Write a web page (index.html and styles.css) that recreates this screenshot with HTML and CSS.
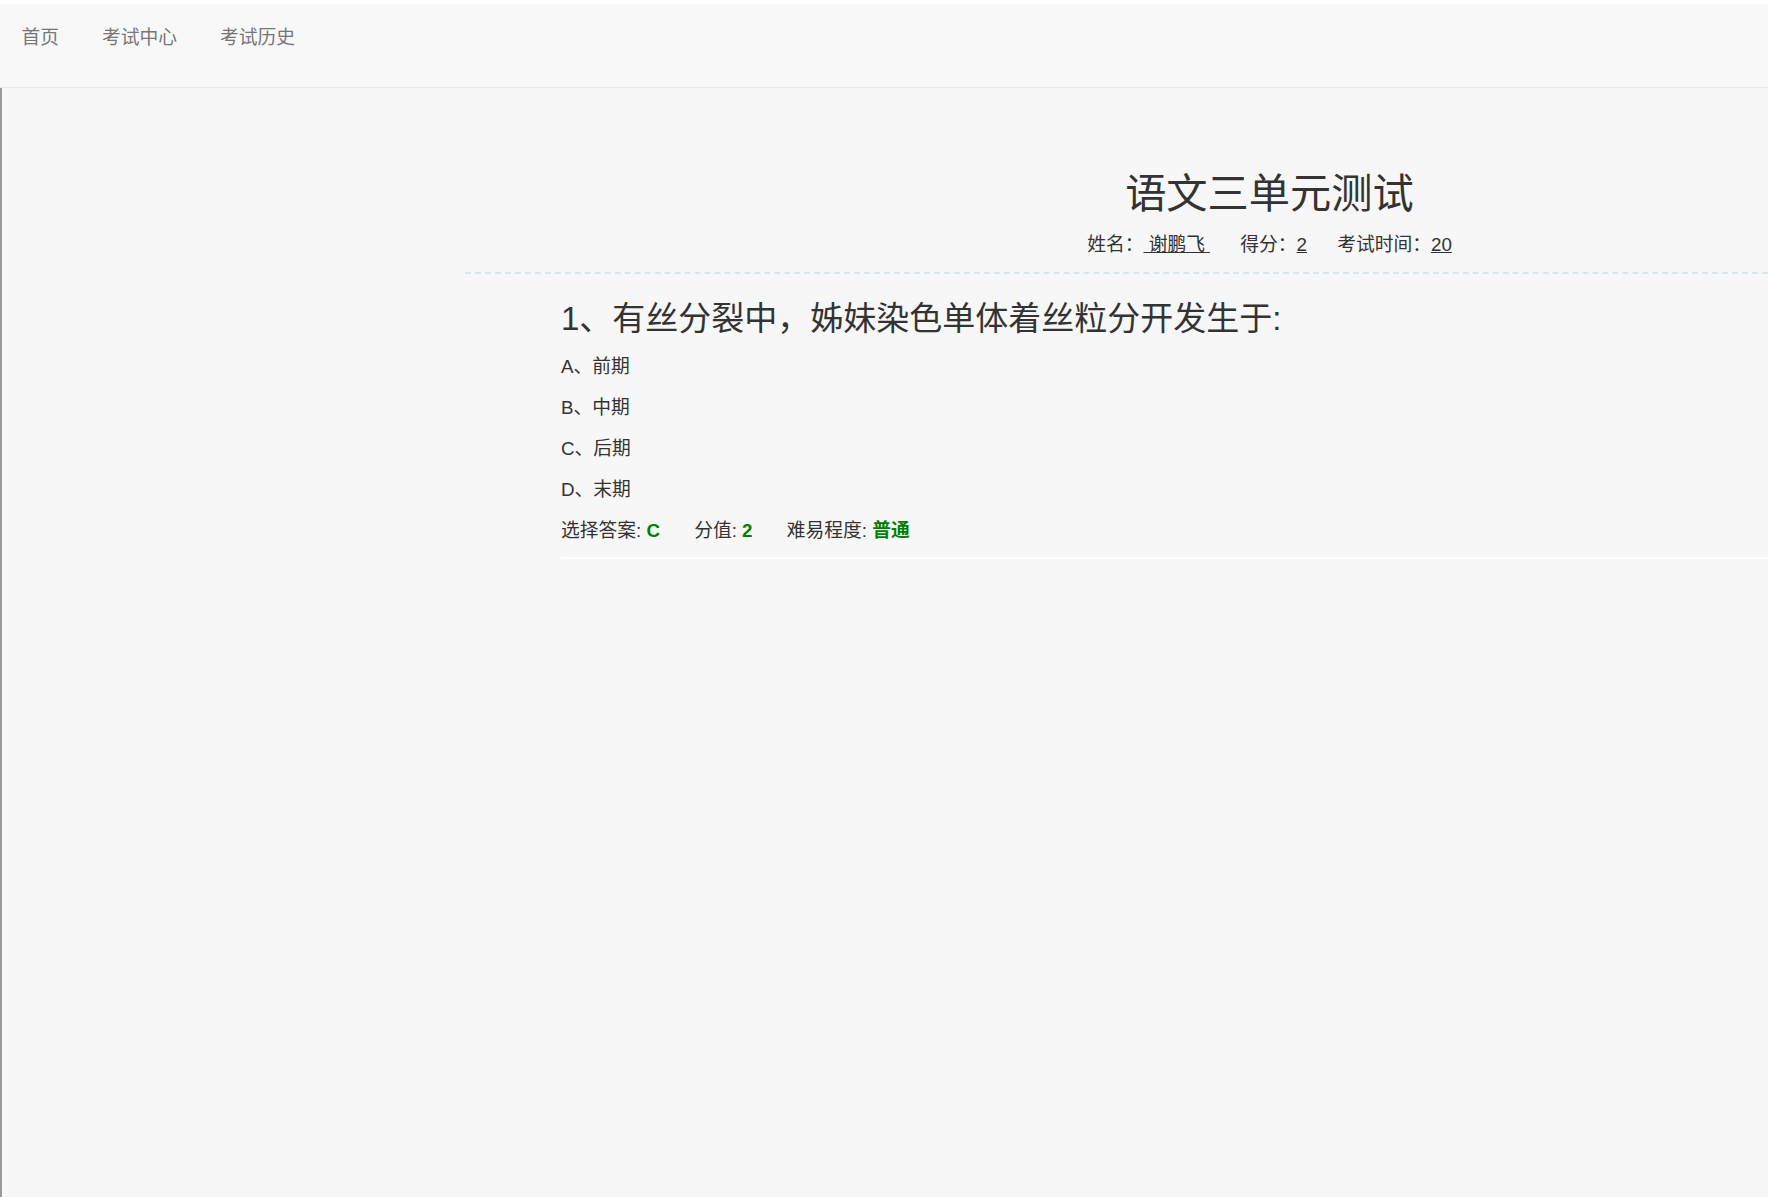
FILE: index.html
```html
<html>
	<head>
		<meta charset="utf-8">
		<link rel="stylesheet" href="styles.css">
	</head>
	<body>
		<div class="navbar">
			<a class="nav-link" href="#">首页</a>
			<a class="nav-link" href="#">考试中心</a>
			<a class="nav-link" href="#">考试历史</a>
		</div>
		<div class="page">
			<div class="sidebar"></div>
			<div class="main">
				<div class="exam-header">
					<h1 class="exam-title">语文三单元测试</h1>
					<div class="exam-info">
						<span>姓名：<u>&nbsp;谢鹏飞&nbsp;</u></span>
						<span class="info-item">得分：<u>2</u></span>
						<span class="info-item">考试时间：<u>20</u></span>
					</div>
				</div>
				<div class="question">
					<h3 class="question-title">1、有丝分裂中，姊妹染色单体着丝粒分开发生于:</h3>
					<div class="option">A、前期</div>
					<div class="option">B、中期</div>
					<div class="option">C、后期</div>
					<div class="option">D、末期</div>
					<div class="option answer">
						选择答案: <b class="good">C</b>
						<span class="answer-item">分值: <b class="good">2</b></span>
						<span class="answer-item">难易程度: <b class="good">普通</b></span>
					</div>
					<hr class="divider">
				</div>
			</div>
		</div>
	</body>
</html>
```

FILE: styles.css
```css
html, body {
	margin: 0;
	background-color: #fff;
}

body {
	padding-top: 4px;
	font-family: "Liberation Sans", "Noto Sans CJK SC", sans-serif;
	font-size: 18.75px;
	color: #333;
}

.navbar {
	display: flex;
	align-items: flex-start;
	height: 84px;
	padding-top: 21px;
	box-sizing: border-box;
	background-color: #f8f8f8;
	border-bottom: 1px solid #e7e7e7;
}

.nav-link {
	padding: 0 21.5px;
	color: #777;
	text-decoration: none;
	line-height: 26px;
}

.page {
	display: flex;
	min-height: calc(100vh - 88px);
	background-color: #f7f7f7;
	border-left: 2px solid #9a9a9a;
}

.sidebar {
	width: 463px;
	flex: none;
}

.main {
	flex: 1;
	padding-top: 83px;
}

.exam-header {
	padding-left: 306px;
	text-align: center;
	border-bottom: 2px dashed #d2e8ec;
	padding-bottom: 14px;
}

.exam-title {
	margin: 0;
	font-size: 41.25px;
	font-weight: normal;
	line-height: 46px;
}

.exam-info {
	margin-top: 15px;
	line-height: 26px;
}

.info-item {
	margin-left: 25px;
}

.question {
	padding-left: 96px;
	padding-top: 25px;
}

.question-title {
	margin: 0 0 7px 0;
	font-size: 33px;
	font-weight: normal;
	line-height: 40px;
}

.option {
	line-height: 41px;
}

.answer-item {
	margin-left: 29px;
}

.good {
	color: #008000;
}

.divider {
	margin: 6px 0 0 0;
	border: 0;
	border-top: 2px solid #fff;
}
```
